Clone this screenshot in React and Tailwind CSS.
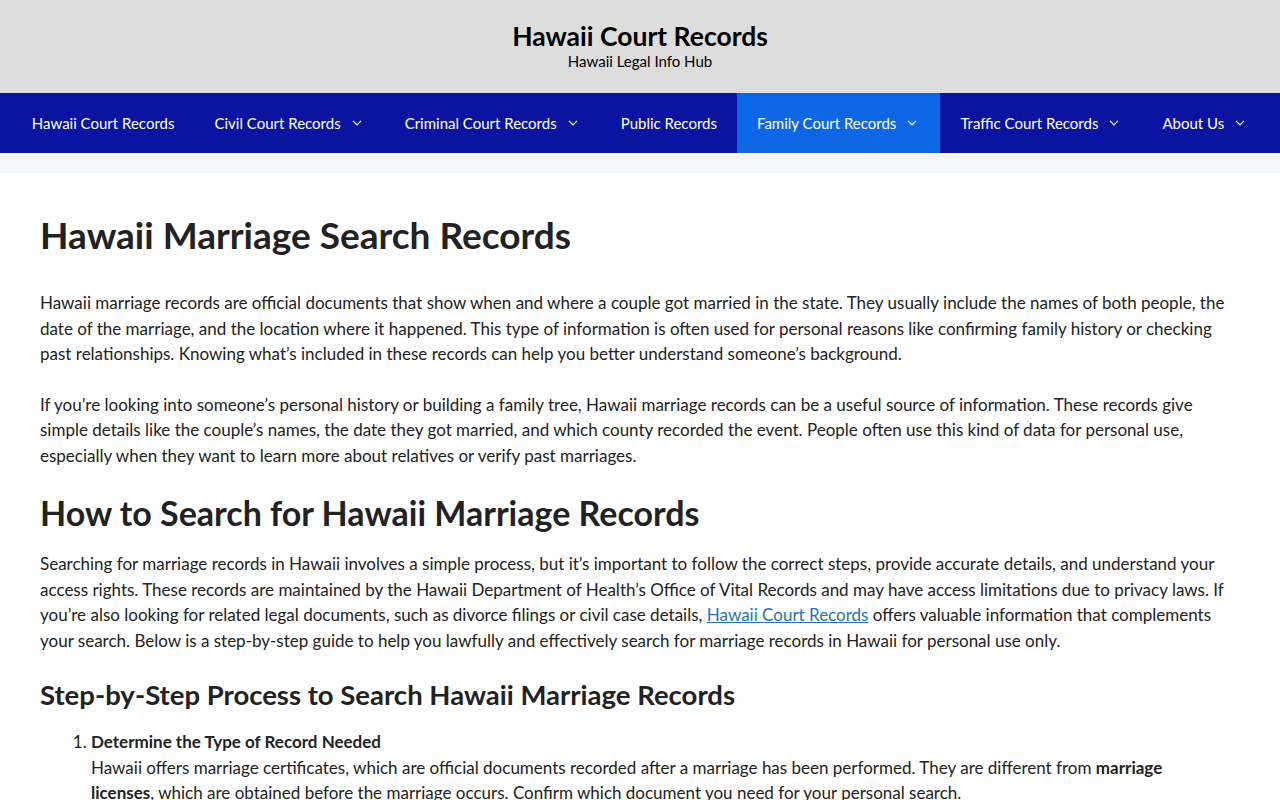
const NAV = [
  { label: "Hawaii Court Records" },
  { label: "Civil Court Records", sub: true },
  { label: "Criminal Court Records", sub: true },
  { label: "Public Records" },
  { label: "Family Court Records", sub: true, active: true },
  { label: "Traffic Court Records", sub: true },
  { label: "About Us", sub: true },
];

function Caret() {
  return (
    <svg width="10" height="6" viewBox="0 0 10 6" className="ml-[11px]" fill="none">
      <polyline points="1,0.8 5,4.8 9,0.8" stroke="white" strokeWidth="1.2" />
    </svg>
  );
}

export default function App() {
  return (
    <div className="min-h-screen bg-[#f6f7f9] text-[#222222]" style={{ fontFamily: 'Lato, "Open Sans", sans-serif' }}>
      {/* Site header */}
      <header className="bg-[#dddddd] h-[93px] pb-[4px] flex flex-col items-center justify-center">
        <div className="text-[26.5px] font-bold leading-[32px] text-black">Hawaii Court Records</div>
        <div className="text-[15px] leading-[18px] text-black">Hawaii Legal Info Hub</div>
      </header>

      {/* Main navigation */}
      <nav className="bg-[#0a14a0] h-[60px] flex justify-center">
        {NAV.map((n) => (
          <a
            key={n.label}
            href="#"
            className={`flex items-center whitespace-nowrap h-full pl-5 ${n.sub ? "pr-[23px]" : "pr-5"} text-[15px] text-white ${n.active ? "bg-[#0d66e4]" : ""}`}
          >
            {n.label}
            {n.sub && <Caret />}
          </a>
        ))}
      </nav>

      {/* Content */}
      <main className="mt-5 bg-white px-10 pt-[40px] pb-10 text-[17px] leading-[1.5]">
        <h1 className="text-[37px] font-bold leading-[1.2] mb-[33px]">Hawaii Marriage Search Records</h1>
        <p className="mb-[25px]">
          Hawaii marriage records are official documents that show when and where a couple got married in the state. They usually include the names of both people, the date of the marriage, and the location where it happened. This type of information is often used for personal reasons like confirming family history or checking past relationships. Knowing what’s included in these records can help you better understand someone’s background.
        </p>
        <p className="mb-[25px]">
          If you’re looking into someone’s personal history or building a family tree, Hawaii marriage records can be a useful source of information. These records give simple details like the couple’s names, the date they got married, and which county recorded the event. People often use this kind of data for personal use, especially when they want to learn more about relatives or verify past marriages.
        </p>
        <h2 className="text-[34px] font-bold leading-[1.2] mb-[17px]">How to Search for Hawaii Marriage Records</h2>
        <p className="mb-[25px]">
          Searching for marriage records in Hawaii involves a simple process, but it’s important to follow the correct steps, provide accurate details, and understand your access rights. These records are maintained by the Hawaii Department of Health’s Office of Vital Records and may have access limitations due to privacy laws. If you’re also looking for related legal documents, such as divorce filings or civil case details,{" "}
          <a href="#" className="text-[#1e73be] underline">Hawaii Court Records</a> offers valuable information that complements your search. Below is a step-by-step guide to help you lawfully and effectively search for marriage records in Hawaii for personal use only.
        </p>
        <h3 className="text-[27.5px] font-bold leading-[1.2] mb-[18px]">Step-by-Step Process to Search Hawaii Marriage Records</h3>
        <ol className="list-decimal pl-[51px] pr-[20px]">
          <li>
            <strong>Determine the Type of Record Needed</strong>
            <br />
            Hawaii offers marriage certificates, which are official documents recorded after a marriage has been performed. They are different from <strong>marriage licenses</strong>, which are obtained before the marriage occurs. Confirm which document you need for your personal search.
          </li>
        </ol>
      </main>
    </div>
  );
}
